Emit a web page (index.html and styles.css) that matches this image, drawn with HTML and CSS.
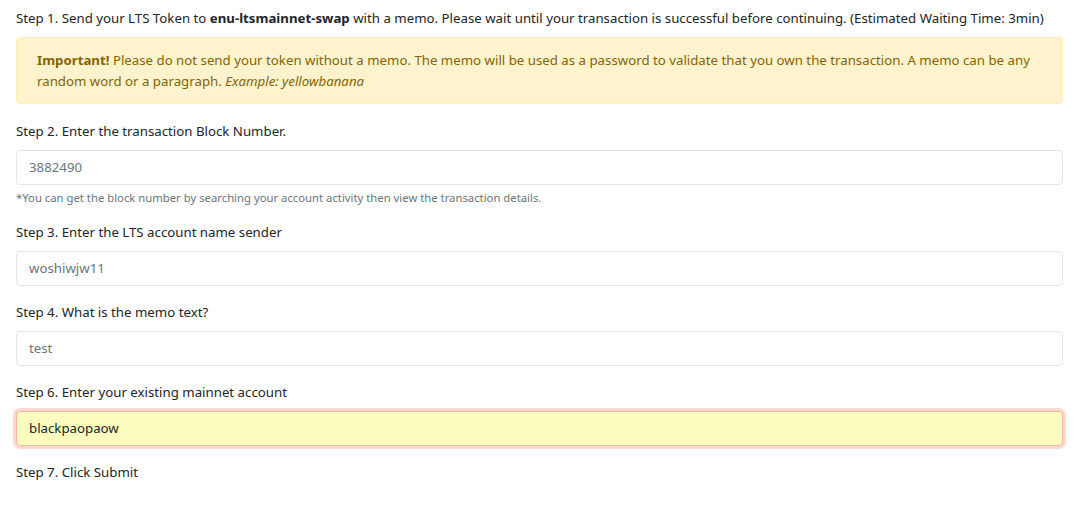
FILE: index.html
```html
<!DOCTYPE html>
<html>
<head>
<meta charset="utf-8">
<link rel="stylesheet" href="styles.css">
</head>
<body>
<div class="page">
  <p class="step step-first">Step 1. Send your LTS Token to <strong>enu-ltsmainnet-swap</strong> with a memo. Please wait until your transaction is successful before continuing. (Estimated Waiting Time: 3min)</p>
  <div class="alert"><strong>Important!</strong> Please do not send your token without a memo. The memo will be used as a password to validate that you own the transaction. A memo can be any random word or a paragraph. <em>Example: yellowbanana</em></div>

  <div class="group">
    <label class="step">Step 2. Enter the transaction Block Number.</label>
    <div class="input muted">3882490</div>
    <small class="hint">*You can get the block number by searching your account activity then view the transaction details.</small>
  </div>

  <div class="group">
    <label class="step">Step 3. Enter the LTS account name sender</label>
    <div class="input muted">woshiwjw11</div>
  </div>

  <div class="group">
    <label class="step">Step 4. What is the memo text?</label>
    <div class="input muted">test</div>
  </div>

  <div class="group">
    <label class="step">Step 6. Enter your existing mainnet account</label>
    <div class="input focus">blackpaopaow</div>
  </div>

  <p class="step">Step 7. Click Submit</p>
</div>
</body>
</html>
```
FILE: styles.css
```css
html, body {
  margin: 0;
  padding: 0;
  background: #fff;
}
body {
  font-family: "Noto Sans", "Open Sans", sans-serif;
  font-size: 13.25px;
  line-height: 21px;
  color: #212529;
}
.page {
  padding: 8px 16px 0 16px;
}
.step {
  display: block;
  margin: 0;
}
.step-first {
  margin-bottom: 8px;
}
.alert {
  background: #fff3cd;
  border: 1px solid #ffeeba;
  border-radius: 4px;
  color: #856404;
  padding: 12px 20px 11px 20px;
}
.alert strong { font-weight: 700; }
.group {
  margin-top: 17px;
  display: flex;
  flex-direction: column;
}
.group + .group { margin-top: 16px; }
.group .step { margin-bottom: 8px; }
.input {
  height: 35px;
  box-sizing: border-box;
  border: 1px solid #e3e6ea;
  border-radius: 4px;
  padding: 6px 12px;
  line-height: 21px;
  background: #fff;
}
.muted { color: #6c757d; }
.focus {
  background: #fafdbd;
  border-color: #f7b7a6;
  box-shadow: 0 0 0 3px #ffd9d0;
  color: #212529;
}
.hint {
  font-size: 11.3px;
  line-height: 17px;
  color: #6c757d;
  margin-top: 4px;
}
.group + p.step { margin-top: 16px; }
```
